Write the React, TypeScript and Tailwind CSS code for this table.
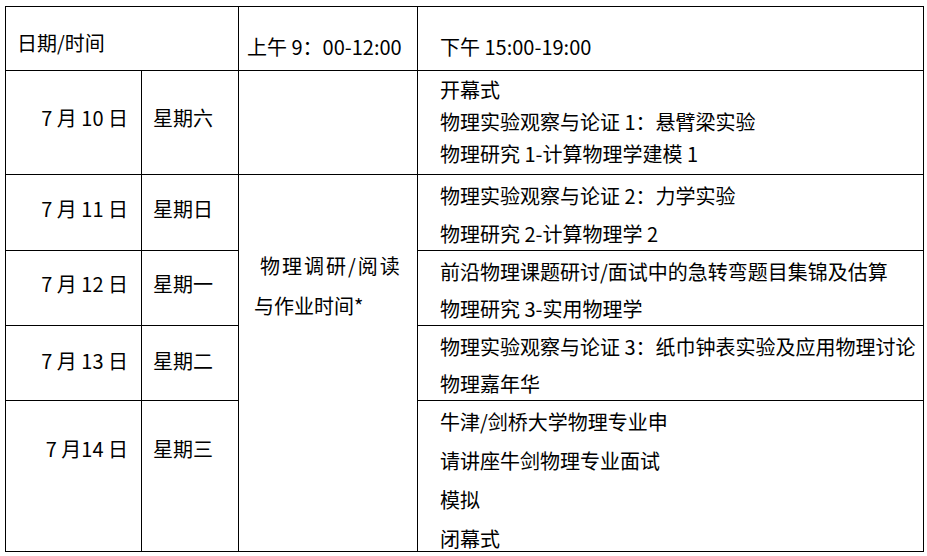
const font = { fontFamily: '"Noto Sans CJK SC", "Noto Sans", sans-serif' };

type Day = {
  date: string;
  weekday: string;
  dayPad: string;
  lines: string[];
  linesClass: string;
};

const days: Day[] = [
  {
    date: "7 月 10 日",
    weekday: "星期六",
    dayPad: "pt-[33px]",
    lines: ["开幕式", "物理实验观察与论证 1：悬臂梁实验", "物理研究 1-计算物理学建模 1"],
    linesClass: "pt-[3px] leading-[32px]",
  },
  {
    date: "7 月 11 日",
    weekday: "星期日",
    dayPad: "pt-[20px]",
    lines: ["物理实验观察与论证 2：力学实验", "物理研究 2-计算物理学 2"],
    linesClass: "pt-[2px] leading-[38px]",
  },
  {
    date: "7 月 12 日",
    weekday: "星期一",
    dayPad: "pt-[19px]",
    lines: ["前沿物理课题研讨/面试中的急转弯题目集锦及估算", "物理研究 3-实用物理学"],
    linesClass: "pt-[2px] leading-[37px]",
  },
  {
    date: "7 月 13 日",
    weekday: "星期二",
    dayPad: "pt-[21px]",
    lines: ["物理实验观察与论证 3：纸巾钟表实验及应用物理讨论", "物理嘉年华"],
    linesClass: "pt-[2px] leading-[37px]",
  },
  {
    date: "7 月14 日",
    weekday: "星期三",
    dayPad: "pt-[34px]",
    lines: ["牛津/剑桥大学物理专业申", "请讲座牛剑物理专业面试", "模拟", "闭幕式"],
    linesClass: "pt-[1px] leading-[39px]",
  },
];

export default function App() {
  return (
    <div className="min-h-[556px] w-[927px] bg-white pl-[5px] pt-[6px] text-[20px] text-black" style={font}>
      <div className="grid w-fit grid-cols-[135px_96px_178px_505px] grid-rows-[63px_103px_75px_74px_74px_150px] gap-px bg-black p-px">
        <div className="col-span-2 bg-white pl-[11px] pt-[22px] leading-[28px]">日期/时间</div>
        <div className="bg-white pl-[8px] pt-[26px] leading-[28px] whitespace-nowrap">上午 9：00-12:00</div>
        <div className="bg-white pl-[22px] pt-[26px] leading-[28px]">下午 15:00-19:00</div>

        {days.map((day, i) => (
          <DayRow key={day.date} day={day} withStudy={i === 1} emptyMiddle={i === 0} />
        ))}
      </div>
    </div>
  );
}

function DayRow({ day, withStudy, emptyMiddle }: { day: Day; withStudy: boolean; emptyMiddle: boolean }) {
  return (
    <>
      <div className={`bg-white pr-[13px] text-right leading-[28px] whitespace-pre ${day.dayPad}`}>{day.date}</div>
      <div className={`bg-white pl-[11px] leading-[28px] ${day.dayPad}`}>{day.weekday}</div>
      {emptyMiddle ? <div className="bg-white" /> : null}
      {withStudy ? (
        <div className="row-span-4 bg-white pl-[15px] pt-[71px] leading-[40px]">
          <div className="pl-[6px] tracking-[2px]">物理调研/阅读</div>
          <div>与作业时间*</div>
        </div>
      ) : null}
      <div className={`bg-white pl-[22px] whitespace-nowrap ${day.linesClass}`}>
        {day.lines.map((line) => (
          <div key={line}>{line}</div>
        ))}
      </div>
    </>
  );
}
